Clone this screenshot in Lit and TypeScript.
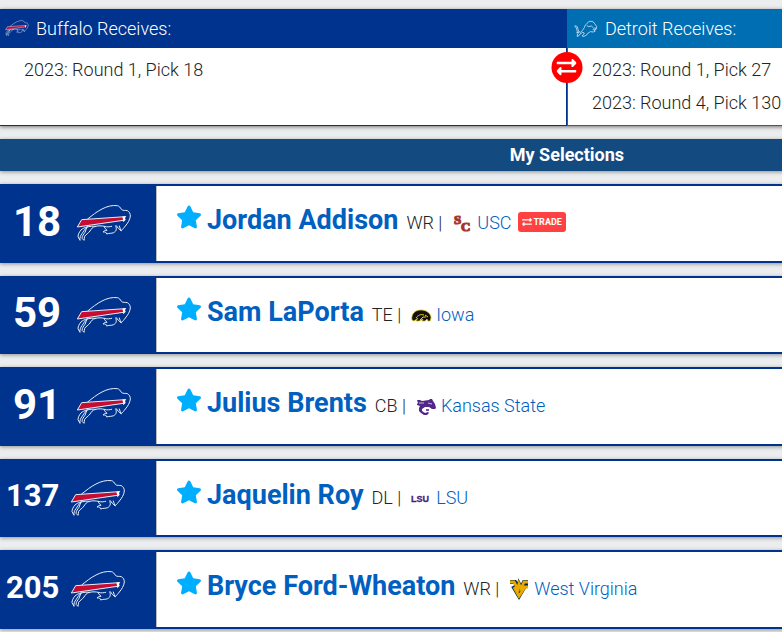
import { LitElement, html, css, svg } from "lit";
import { customElement, property } from "lit/decorators.js";

interface Pick {
  pick: number;
  name: string;
  position: string;
  school: string;
  trade?: boolean;
}

const picks: Pick[] = [
  { pick: 18, name: "Jordan Addison", position: "WR", school: "USC", trade: true },
  { pick: 59, name: "Sam LaPorta", position: "TE", school: "Iowa" },
  { pick: 91, name: "Julius Brents", position: "CB", school: "Kansas State" },
  { pick: 137, name: "Jaquelin Roy", position: "DL", school: "LSU" },
  { pick: 205, name: "Bryce Ford-Wheaton", position: "WR", school: "West Virginia" },
];

const schoolArt: Record<string, unknown> = {
  USC: svg`
    <g font-family="Liberation Serif, serif" font-weight="700" font-size="13"
       fill="#9d2235" stroke="#a5392f" stroke-width="1.200">
      <text x="2" y="11">S</text><text x="9" y="18">C</text>
    </g>`,
  Iowa: svg`
    <path d="M1 15C0 9 4 5 10 5c6 0 10 4 10 8l-1 3h-2l-1-2-2 2h-3l1-2-4 2H5l2-3-4 3z" fill="#111" stroke="#d8bd00" stroke-width=".7"/>
    <path d="M5 13c2-3 5-4 8-3M9 15l3-3 3 0M14 10l3 2" fill="none" stroke="#f5d000" stroke-width="1"/>`,
  "Kansas State": svg`
    <path d="M1 4h3l2 1 7-1 1-1h2l1 2 2 3 1 4-1 1h-3l-3-2H9l-3 2 0 2 3 2 3-1 1 1-2 2H8l-3-2-2-2 0-3 1-2-3-1V8l1-1z" fill="#512888"/>
    <path d="M12 7l4 1M3 7l5 0" fill="none" stroke="#fff" stroke-width=".7"/>
    <path d="M10 14l3 0" fill="none" stroke="#512888" stroke-width="1.600"/>`,
  LSU: svg`
    <text x="0" y="14" font-family="Liberation Sans, sans-serif" font-weight="700" font-size="9"
      fill="#461d7c" stroke="#461d7c" stroke-width=".3">LSU</text>`,
  "West Virginia": svg`
    <g fill="none" stroke-linejoin="miter">
      <path d="M1 3h5l3 6 1-4 2 4 3-6h4M4 7l6 10 6-10h3" stroke="#002855" stroke-width="4"/>
      <path d="M1 3h4l4 7 1-5 2 5 3-7h4M5 8l5 9 6-9h3" stroke="#eaaa00" stroke-width="2.800"/>
    </g>`,
};

const swapArrows = svg`
  <path d="M0 160v-16c0-13 11-24 24-24h360V72c0-21 26-32 41-17l80 80c9 9 9 25 0 34l-80 80c-15 15-41 4-41-17v-48H24c-13 0-24-11-24-24zm488 168H128v-48c0-21-26-32-41-17L7 343c-9 9-9 25 0 34l80 80c15 15 41 4 41-17v-48h360c13 0 24-11 24-24v-16c0-13-11-24-24-24z" transform="translate(0 -24)"/>`;

@customElement("bison-logo")
export class BisonLogo extends LitElement {
  static styles = css`
    :host {
      display: block;
      width: 56px;
      flex: none;
    }
    svg {
      display: block;
      width: 100%;
      height: auto;
    }
    .line {
      fill: none;
      stroke: #e8eefa;
      stroke-width: 3;
      stroke-linejoin: round;
      stroke-linecap: round;
    }
    .stripe {
      fill: #c60c30;
      stroke: #e8eefa;
      stroke-width: 3;
    }
  `;
  render() {
    return html`<svg viewBox="211 56 168 114" aria-hidden="true">
      <path class="line" d="M246 101c14-11 27-22 43-30 15-8 31-12 46-10 6 1 9 6 12 11 5 5 12 2 18 4 6 3 9 9 9 16-1 11-8 22-15 30-4 5-8 11-13 14-2-5-3-9-5-14"/>
      <path class="line" d="M332 121l6 8 8 7M330 122c4 8 2 16-6 20-7 3-14 1-21 4 0-4-3-7-11-6 3-4 6-5 12-5-5-6-9-8-8-12 8 3 17 1 22 0"/>
      <path class="line" d="M296 123c-8-2-18-2-26 0-10 2-13 8-17 14-6 8-12 10-16 16-2 4 0 8-2 12l-6-6c0-7 5-12 9-18 2-5 4-11 6-16M244 125c-8 2-14 5-18 9-5 6-9 13-9 20l6 11c-1-8 1-14 6-20 4-6 8-13 15-20M270 123c-9-1-17 0-26 2"/>
      <path class="stripe" d="M228 103l130-9-5 11-138 20z"/>
      <path d="M350 94l12-2-4 6 2 5-7 8-1-9z" fill="#fff"/>
    </svg>`;
  }
}

@customElement("pick-card")
export class PickCard extends LitElement {
  @property({ attribute: false }) item!: Pick;

  static styles = css`
    :host {
      display: flex;
      font-size: 27px;
      line-height: 1.5;
      border: solid #00338d;
      border-width: 2px 0;
      background: #fff;
      box-shadow: 0 1px 4px rgba(0, 0, 0, 0.4);
    }
    .slot {
      display: flex;
      align-items: center;
      gap: 15px;
      box-sizing: border-box;
      width: 156px;
      flex: none;
      padding: 0 0 0 13px;
      background: #00338d;
      color: #fff;
      font-size: 42px;
      line-height: 48px;
      font-weight: 700;
    }
    .slot.long {
      gap: 11px;
      padding-left: 6px;
      font-size: 31px;
    }
    .number {
      padding-bottom: 3px;
    }
    .detail {
      display: flex;
      align-items: baseline;
      flex: 1;
      padding: 14px 0 20px 20px;
      border-left: 1px solid #bbb;
    }
    .star {
      width: 24px;
      height: 24px;
      margin-right: 6px;
      fill: #00aeff;
    }
    a {
      color: #0060bf;
      text-decoration: none;
    }
    .name {
      font-weight: 700;
    }
    .small {
      font-size: 18px;
      font-weight: 300;
    }
    .position {
      margin: 0 10px 0 8px;
      color: #222;
    }
    .crest {
      width: 20px;
      height: 20px;
      margin: 6px 5px 0 0;
      align-self: center;
      overflow: visible;
    }
    .trade {
      display: flex;
      align-items: center;
      align-self: center;
      gap: 2px;
      height: 20px;
      margin: 4px 0 0 6px;
      padding: 0 4px;
      border-radius: 3px;
      background: #ff4141;
      color: #fff;
      font-size: 9px;
      font-weight: 700;
      line-height: 20px;
    }
    .trade svg {
      width: 10px;
      height: 10px;
      fill: currentColor;
    }
  `;
  render() {
    const p = this.item;
    return html`
      <div class="slot ${p.pick > 99 ? "long" : ""}">
        <span class="number">${p.pick}</span><bison-logo></bison-logo>
      </div>
      <div class="detail">
        <svg class="star" viewBox="20 0 536 512" aria-hidden="true">
          <path d="M259.300 17.800L194 150.200 47.900 171.500c-26.200 3.800-36.700 36.100-17.700 54.600l105.700 103-25 145.500c-4.500 26.300 23.200 46 46.400 33.700L288 439.600l130.700 68.700c23.200 12.200 50.900-7.400 46.400-33.700l-25-145.500 105.700-103c19-18.500 8.500-50.800-17.700-54.600L382 150.200 316.700 17.800c-11.700-23.600-45.600-23.900-57.400 0z" />
        </svg>
        <a class="name" href="#player">${p.name}</a>
        <span class="small position">${p.position} |</span>
        <svg class="crest" viewBox="0 0 20 20" aria-hidden="true">${schoolArt[p.school]}</svg>
        <a class="small" href="#school">${p.school}</a>
        ${p.trade
          ? html`<span class="trade"><svg viewBox="0 0 512 464" aria-hidden="true">${swapArrows}</svg>TRADE</span>`
          : ""}
      </div>
    `;
  }
}

@customElement("app-root")
export class AppRoot extends LitElement {
  static styles = css`
    :host {
      display: block;
      min-height: 100vh;
      overflow: hidden;
      background: #ebedef;
      color: #222;
      font: 300 18px/33px Roboto, sans-serif;
    }
    .board {
      width: 145%;
      padding-top: 9px;
    }
    .deal {
      position: relative;
      display: grid;
      grid-template-columns: 1fr 1fr;
      margin-bottom: 13px;
      background: #fff;
      box-shadow: 0 1px 4px rgba(0, 0, 0, 0.5);
    }
    .team {
      border-bottom: 1px solid #00338d;
    }
    .home {
      border-right: 1px solid #00338d;
    }
    .away {
      border-left: 1px solid #006eb3;
      border-bottom-color: #006eb3;
    }
    .team h2 {
      display: flex;
      align-items: center;
      gap: 7px;
      height: 39px;
      margin: 0;
      padding-left: 5px;
      background: #00338d;
      color: #fff;
      font-size: 18px;
      font-weight: 300;
    }
    .away h2 {
      padding-left: 6px;
      background: #006eb3;
    }
    .team bison-logo,
    .lion {
      width: 24px;
    }
    .team ul {
      margin: 0;
      padding: 5px 0 6px 24px;
      list-style: none;
    }
    .swap {
      position: absolute;
      top: 43px;
      left: 50%;
      display: grid;
      place-items: center;
      width: 31px;
      height: 31px;
      border-radius: 50%;
      background: #f00;
      transform: translateX(-50%);
    }
    .swap svg {
      width: 20px;
      fill: #fff;
    }
    .title {
      margin: 0 0 13px;
      background: #134a80;
      color: #fff;
      font-size: 18px;
      font-weight: 700;
      line-height: 32px;
      text-align: center;
      box-shadow: 0 1px 4px rgba(0, 0, 0, 0.4);
    }
    .picks {
      display: grid;
      gap: 13px;
    }
  `;
  render() {
    return html`
      <main class="board">
        <section class="deal">
          <div class="team home">
            <h2><bison-logo></bison-logo>Buffalo Receives:</h2>
            <ul>
              <li>2023: Round 1, Pick 18</li>
            </ul>
          </div>
          <div class="team away">
            <h2>
              <svg class="lion" viewBox="0 0 72 54" aria-hidden="true">
                <path
                  d="M2 18c4-3 8 1 9 6 2 7 3 12 8 13 6-3 8-9 12-14 1-7 7-12 12-17 8-4 16-2 18 4l7 9-2 9-7 2 5 3-6 3-9-1-8 5-3 5-8 4-6-1 4-4 3-5-5-2-8 5-3 5-6 2 2-7 4-6-7 2C12 38 9 32 7 24L2 18zM38 16l6 4 8-2 6 5M56 29l6-5 6 1"
                  fill="none" stroke="#c9dff0" stroke-width="2.600" stroke-linejoin="round" />
              </svg>
              Detroit Receives:
            </h2>
            <ul>
              <li>2023: Round 1, Pick 27</li>
              <li>2023: Round 4, Pick 130</li>
            </ul>
          </div>
          <span class="swap"><svg viewBox="0 0 512 464" aria-hidden="true">${swapArrows}</svg></span>
        </section>
        <h1 class="title">My Selections</h1>
        <section class="picks">
          ${picks.map((p) => html`<pick-card .item=${p}></pick-card>`)}
        </section>
      </main>
    `;
  }
}
